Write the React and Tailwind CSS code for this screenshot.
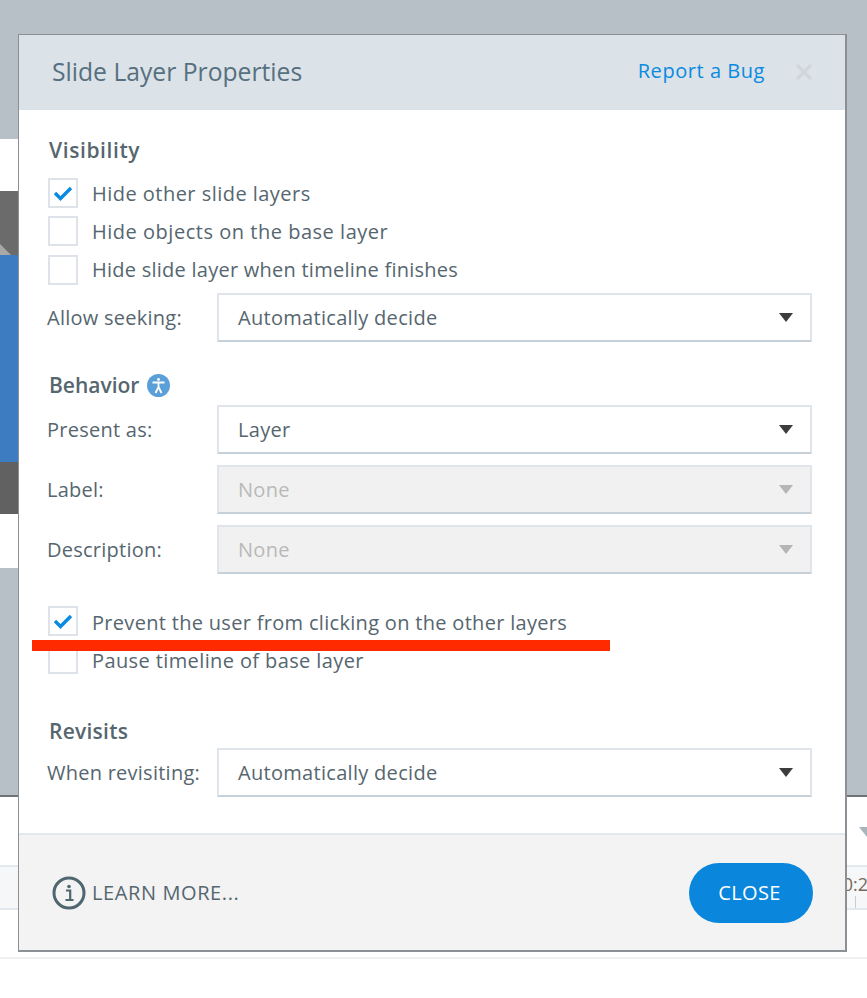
import React from 'react';

const FONT = "font-['Open_Sans',sans-serif]";

function Check({ checked, label, track }) {
  return (
    <div className="flex h-[38.3px] items-center">
      <div className="flex h-[30px] w-[30px] shrink-0 items-center justify-center border-2 border-[#dde3e8] bg-white">
        {checked && (
          <svg width="20" height="16" viewBox="0 0 20 16" fill="none">
            <path d="M2 8l5.5 5.5L18 3" stroke="#0a8ae0" strokeWidth="3.4" />
          </svg>
        )}
      </div>
      <span className={`ml-[14px] text-[20px] text-[#56666f] ${track}`}>{label}</span>
    </div>
  );
}

function Select({ label, value, disabled }) {
  return (
    <div className="-ml-[1px] flex items-center">
      <span className="w-[170px] shrink-0 pt-[1px] text-[20px] tracking-[0.25px] text-[#56666f]">{label}</span>
      <div
        className={`flex h-[49px] w-[595px] items-center justify-between border-2 border-[#dfe5ea] border-b-[#c5d0d9] pl-[19px] pr-[17px] ${
          disabled ? 'bg-[#f1f1f1]' : 'bg-white'
        }`}
      >
        <span className={`pt-[1px] text-[20px] tracking-[0.3px] ${disabled ? 'text-[#b9b9b9]' : 'text-[#56666f]'}`}>{value}</span>
        <svg width="14" height="9" viewBox="0 0 14 9">
          <path d="M0 0h14L7 9z" fill={disabled ? '#b5b5b5' : '#3c3c3c'} />
        </svg>
      </div>
    </div>
  );
}

export default function App() {
  return (
    <div className={`relative h-[998px] w-[867px] overflow-hidden bg-white ${FONT}`}>
      {/* page behind the dialog */}
      <div className="flex h-[797px] justify-between border-b-2 border-[#6f7478] bg-[#b6c0c6]">
        <div className="mt-[139px] flex h-[429px] w-[18px] flex-col">
          <div className="h-[52px] bg-white" />
          <div className="flex h-[64px] items-end bg-[#6b6b6b]">
            <svg width="11" height="11" viewBox="0 0 11 11">
              <path d="M0 0l11 11H0z" fill="#a8a8a8" />
            </svg>
          </div>
          <div className="h-[207px] bg-[#3d7cc0]" />
          <div className="h-[52px] bg-[#616161]" />
          <div className="h-[54px] bg-white" />
        </div>
      </div>
      <div className="flex h-[162px] flex-col justify-between border-b-2 border-[#eef0f2]">
        <div className="flex justify-end pt-[30px]">
          <svg width="8" height="10" viewBox="0 0 8 10">
            <path d="M0 0h8v10z" fill="#a9b4bb" />
          </svg>
        </div>
        <div className="mb-[47px] flex h-[45px] justify-end overflow-hidden border-y-2 border-[#e3e8ec] bg-[#f5f7f8]">
          <div className="relative -mr-[1px] flex w-[20px] items-center justify-end">
            <span className="pb-[6px] text-[18px] text-[#77695a]">0:2</span>
            <div className="absolute bottom-0 left-[7px] h-[12px] w-[1px] bg-[#c8cfd4]" />
          </div>
        </div>
      </div>

      {/* dialog */}
      <div className="absolute left-[18px] top-[34px] flex h-[918px] w-[829px] flex-col border-t border-l border-r-2 border-b-2 border-[#8c9094] bg-white">
        <div className="flex h-[75px] shrink-0 items-center justify-between bg-[#dbe2e8] pl-[33px] pr-[32px]">
          <h1 className="pb-[1px] text-[24.7px] font-normal text-[#56707f]">Slide Layer Properties</h1>
          <div className="flex items-center gap-[30px] pb-[2px]">
            <a className="pb-[1px] text-[20px] tracking-[0.55px] text-[#0a8ae0]">Report a Bug</a>
            <svg width="18" height="18" viewBox="0 0 18 18">
              <path d="M2 2l14 14M16 2L2 16" stroke="#d2d6d8" strokeWidth="3.4" />
            </svg>
          </div>
        </div>

        <div className="flex-1 pl-[29px]">
          <h2 className="mt-[25px] ml-[1px] text-[21px] leading-[30px] font-semibold tracking-[0.6px] text-[#56666f]">Visibility</h2>
          <div className="mt-[9px]">
            <Check checked label="Hide other slide layers" track="pt-[1px] tracking-[0.47px]" />
            <Check label="Hide objects on the base layer" track="pt-[1px] tracking-[0.52px]" />
            <Check label="Hide slide layer when timeline finishes" track="pt-[1px] tracking-[0.25px]" />
          </div>
          <div className="mt-[4px]">
            <Select label="Allow seeking:" value="Automatically decide" />
          </div>

          <div className="mt-[29px] ml-[1px] flex h-[30px] items-center gap-[8px]">
            <h2 className="text-[21px] font-semibold text-[#56666f]">Behavior</h2>
            <div className="flex h-[23px] w-[23px] items-center justify-center rounded-full bg-[#5b9fd9]">
              <svg width="15" height="17" viewBox="0 0 15 17" fill="none" stroke="#fff" strokeWidth="1.8">
                <circle cx="7.5" cy="2.5" r="1.4" fill="#fff" stroke="none" />
                <path d="M1.5 5.5h12M7.5 5.5v5M7.5 10l-3 6M7.5 10l3 6" />
              </svg>
            </div>
          </div>
          <div className="mt-[4px] flex flex-col gap-[11px]">
            <Select label="Present as:" value="Layer" />
            <Select label="Label:" value="None" disabled />
            <Select label="Description:" value="None" disabled />
          </div>

          <div className="mt-[28px]">
            <Check checked label="Prevent the user from clicking on the other layers" track="pt-[3px] tracking-[0.31px]" />
            <Check label="Pause timeline of base layer" track="pt-[3px] tracking-[0.39px]" />
          </div>

          <h2 className="mt-[38px] ml-[1px] text-[21px] leading-[30px] font-semibold tracking-[0.25px] text-[#56666f]">Revisits</h2>
          <div className="mt-[2px]">
            <Select label="When revisiting:" value="Automatically decide" />
          </div>
        </div>

        <div className="flex h-[117px] shrink-0 items-center justify-between border-t-2 border-[#e3e8ec] bg-[#f3f3f3] pl-[33px] pr-[32px]">
          <div className="flex items-center gap-[6px]">
            <svg width="34" height="34" viewBox="0 0 34 34" fill="none">
              <circle cx="17" cy="17" r="15" stroke="#50666f" strokeWidth="3" />
              <circle cx="17" cy="10.5" r="1.8" fill="#50666f" />
              <path d="M14 14.5h4.2v9M13.5 24h8" stroke="#50666f" strokeWidth="2.2" />
            </svg>
            <span className="text-[20px] tracking-[0.6px] text-[#56666f]">LEARN MORE...</span>
          </div>
          <button className="h-[60px] w-[124px] rounded-full bg-[#0a87dc] pr-[3px] text-[20px] tracking-[0.4px] text-white">CLOSE</button>
        </div>

        {/* red annotation line */}
        <div className="absolute left-[13px] top-[605px] h-[11px] w-[578px] bg-[#ff2a00]" />
      </div>
    </div>
  );
}
